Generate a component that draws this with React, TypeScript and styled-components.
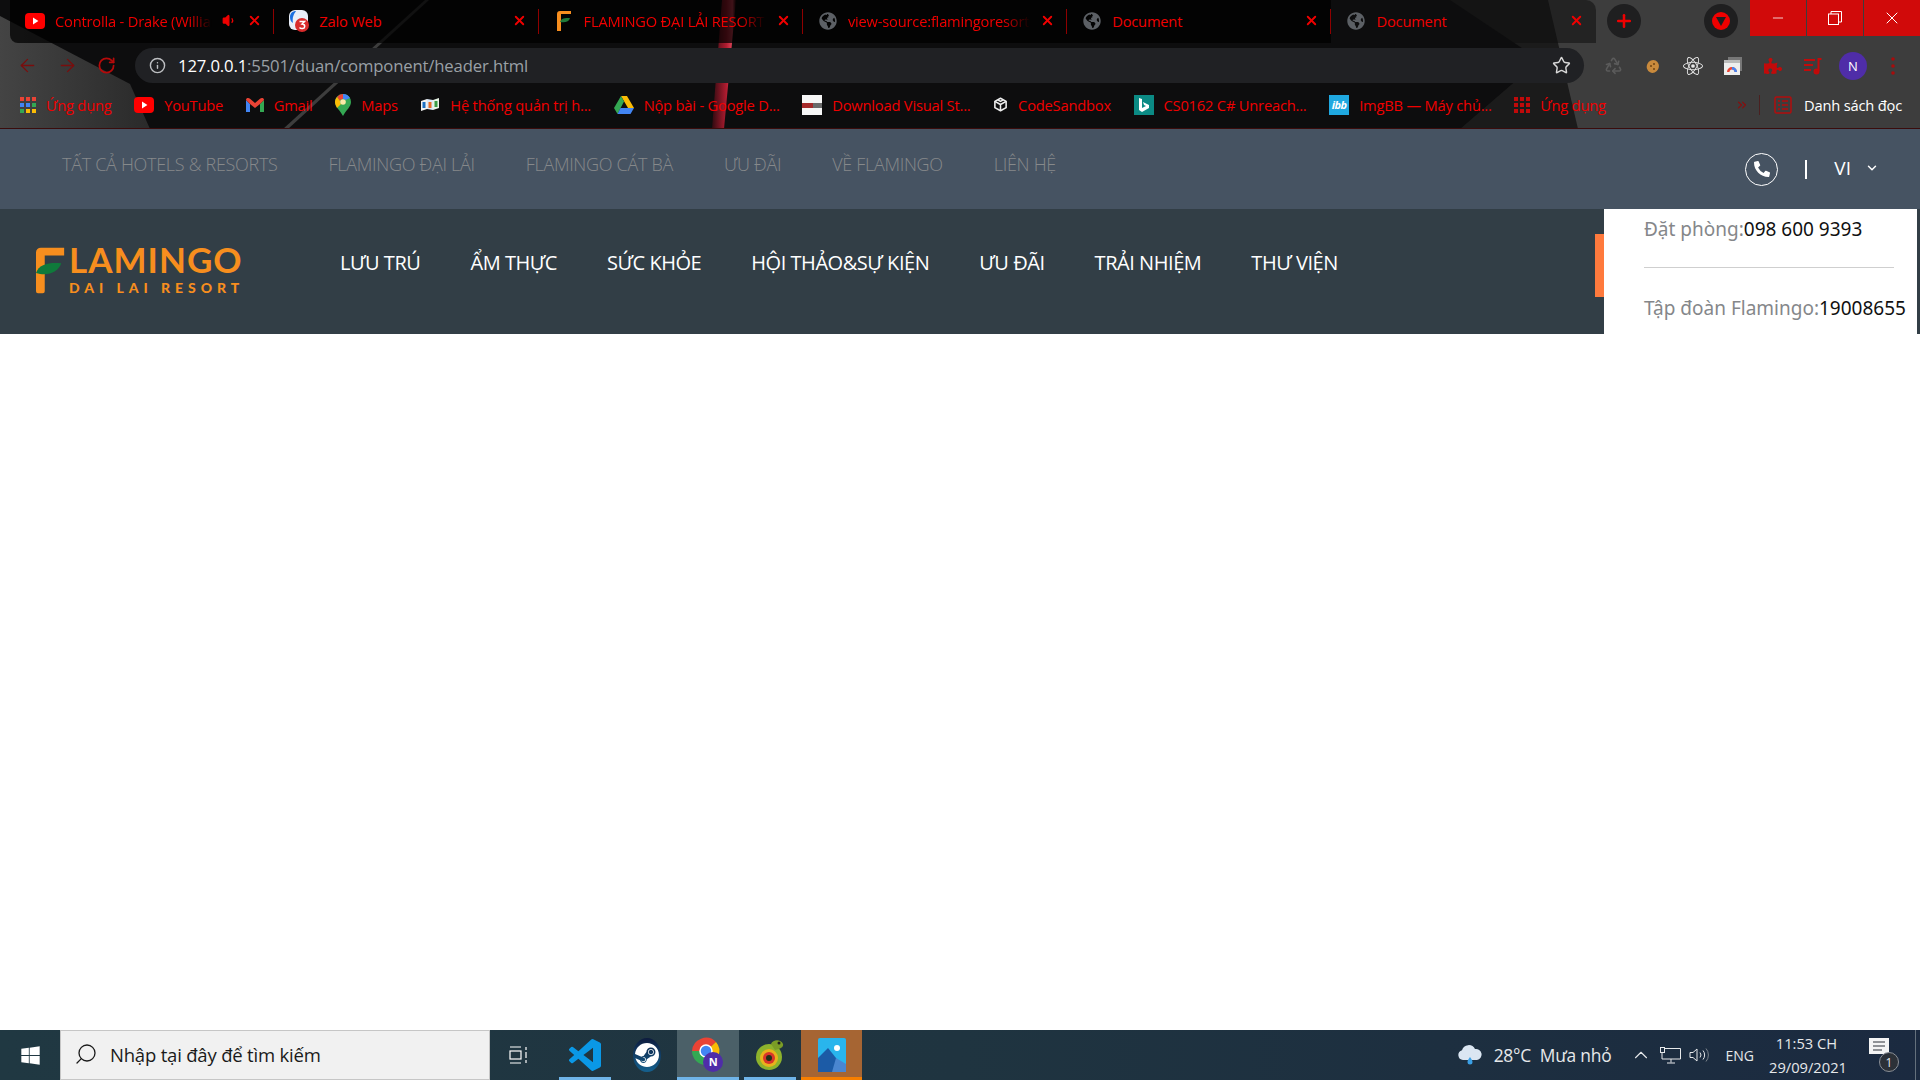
import React, { ReactNode } from 'react'
import styled, { createGlobalStyle } from 'styled-components'
import {
  ArrowLeft,
  ArrowRight,
  RotateCw,
  Info,
  Star,
  Recycle,
  X,
  Plus,
  Minus,
  Volume1,
  ChevronDown,
  ChevronUp,
  ChevronsRight,
  Search,
} from 'lucide-react'
import { FaGlobeAmericas, FaWindows, FaPuzzlePiece, FaPhoneAlt } from 'react-icons/fa'
import { SiSteam, SiReact } from 'react-icons/si'

const GlobalStyle = createGlobalStyle`
  html, body {
    margin: 0;
    padding: 0;
    height: 100%;
    overflow: hidden;
    background: #fff;
    font-family: "Open Sans", "Noto Sans", sans-serif;
  }
  * { box-sizing: border-box; }
`

const Page = styled.div`
  width: 1920px;
  height: 1080px;
  display: flex;
  flex-direction: column;
`

/* ---------- browser chrome ---------- */

const BrowserFrame = styled.div`
  position: relative;
  height: 129px;
  background: #0d0d0e;
  border-bottom: 1px solid #3a0c0c;
  overflow: hidden;
`

const Wallpaper = styled.svg`
  position: absolute;
  inset: 0;
`

const TabStrip = styled.div`
  position: relative;
  height: 48px;
  padding-left: 10px;
  display: flex;
  align-items: flex-start;
`

const Tab = styled.div<{ $last?: boolean; $first?: boolean }>`
  width: 264.3px;
  height: 43px;
  padding: 0 12px 2px 15px;
  display: flex;
  align-items: center;
  gap: 10px;
  background: ${({ $last }) => ($last ? 'rgba(14, 14, 14, 0.55)' : 'rgba(0, 0, 0, 0.72)')};
  border-radius: ${({ $first, $last }) => ($first ? '0 0 0 8px' : $last ? '0 10px 0 0' : '0')};
  flex: none;
  position: relative;
  &::after {
    content: '';
    display: ${({ $last }) => ($last ? 'none' : 'block')};
    position: absolute;
    right: 0;
    top: 9px;
    height: 25px;
    width: 1px;
    background: #8f0000;
  }
`

const FaviconSlot = styled.span`
  width: 20px;
  flex: none;
  display: flex;
  align-items: center;
  justify-content: center;
`

const TabTitle = styled.span<{ $fade?: boolean }>`
  flex: 1;
  min-width: 0;
  font-size: 14.7px;
  letter-spacing: -0.2px;
  color: #f00000;
  white-space: nowrap;
  overflow: hidden;
  ${({ $fade }) =>
    $fade && 'mask-image: linear-gradient(to right, #000 85%, transparent 100%);'}
`

const TabRound = styled.div`
  width: 34px;
  height: 34px;
  border-radius: 50%;
  background: #1f1f20;
  display: flex;
  align-items: center;
  justify-content: center;
  flex: none;
`

const NewTabSlot = styled(TabRound)`
  margin: 4px 0 0 11px;
`

const RecorderSlot = styled(TabRound)`
  margin: 4px 0 0 63px;
`

const RecorderDot = styled.div`
  width: 18px;
  height: 18px;
  border-radius: 50%;
  background: #f00000;
  display: flex;
  align-items: center;
  justify-content: center;
`

const WindowControls = styled.div`
  position: absolute;
  top: 0;
  right: 0;
  display: flex;
  gap: 1px;
`

const WindowButton = styled.div`
  width: 56px;
  height: 36px;
  background: #d10a0a;
  display: flex;
  align-items: center;
  justify-content: center;
  color: #fff;
`

const ToolbarRow = styled.div`
  position: relative;
  height: 35px;
  display: flex;
  align-items: center;
`

const NavButtons = styled.div`
  width: 135px;
  padding-left: 17px;
  display: flex;
  align-items: center;
  gap: 19px;
  color: #7a0d0d;
`

const ReloadIcon = styled.span`
  display: flex;
  color: #b50a0a;
`

const AddressPill = styled.div`
  width: 1449px;
  height: 35px;
  background: #202124;
  border-radius: 18px;
  display: flex;
  align-items: center;
  padding: 0 13px 0 14px;
  color: #bdbfc2;
`

const AddressText = styled.div`
  flex: 1;
  margin-left: 12px;
  font-size: 16.7px;
  letter-spacing: -0.15px;
  color: #9aa0a6;
  white-space: nowrap;
`

const Host = styled.span`
  color: #fff;
`

const Extensions = styled.div`
  display: flex;
  align-items: center;
  margin-left: 9px;
`

const Extension = styled.div`
  width: 40px;
  height: 35px;
  display: flex;
  align-items: center;
  justify-content: center;
  color: #c20a0a;
`

const Avatar = styled.div`
  width: 28px;
  height: 28px;
  border-radius: 50%;
  background: #4f2da8;
  color: #fff;
  font-size: 13px;
  display: flex;
  align-items: center;
  justify-content: center;
`

const BookmarkBar = styled.div`
  position: relative;
  height: 45px;
  padding: 0 18px 2px 20px;
  display: flex;
  align-items: center;
  gap: 22.6px;
`

const Bookmark = styled.div`
  display: flex;
  align-items: center;
  gap: 10px;
  flex: none;
  font-size: 14.7px;
  letter-spacing: -0.2px;
  color: #f00000;
  white-space: nowrap;
`

const BookmarkEnd = styled.div`
  margin-left: auto;
  display: flex;
  align-items: center;
  color: #8a0d0d;
`

const BookmarkDivider = styled.div`
  width: 1px;
  height: 20px;
  background: #4a2020;
  margin: 0 14px 0 10px;
`

const ReadingLabel = styled.span`
  margin-left: 12px;
  font-size: 14.7px;
  letter-spacing: -0.2px;
  color: #fff;
`

const IbbBadge = styled.span`
  width: 20px;
  height: 20px;
  background: #1fa8e0;
  color: #fff;
  font-size: 11px;
  font-style: italic;
  font-weight: 700;
  letter-spacing: -0.5px;
  display: flex;
  align-items: center;
  justify-content: center;
`

const BingBadge = styled.span`
  width: 20px;
  height: 20px;
  background: #0b8a84;
  display: flex;
  align-items: center;
  justify-content: center;
`

/* ---------- website header ---------- */

const TopBar = styled.div`
  height: 80px;
  background: #465362;
  display: flex;
  align-items: center;
  padding: 0 41px 10px 62px;
`

const TopLinks = styled.nav`
  display: flex;
  gap: 51px;
  flex: 1;
`

const TopLink = styled.a`
  font-size: 18px;
  font-weight: 300;
  letter-spacing: -0.3px;
  color: #86898b;
`

const TopActions = styled.div`
  display: flex;
  align-items: center;
  margin-top: 10px;
  color: #fff;
`

const PhoneCircle = styled.div`
  width: 33px;
  height: 33px;
  border-radius: 50%;
  border: 1.5px solid #fff;
  display: flex;
  align-items: center;
  justify-content: center;
`

const Pipe = styled.span`
  width: 2px;
  height: 19px;
  margin: 0 27px 0 27px;
  background: #fff;
`

const Lang = styled.div`
  display: flex;
  align-items: center;
  gap: 14px;
  font-size: 19px;
  margin-top: -3px;
`

const MainBar = styled.div`
  position: relative;
  height: 125px;
  background: #323e46;
  display: flex;
  align-items: center;
  padding-left: 36px;
`

const Logo = styled.div`
  width: 204px;
  margin-right: 100px;
  flex: none;
  display: flex;
  align-items: flex-start;
  svg {
    flex: none;
  }
`

const LogoText = styled.div`
  display: flex;
  flex-direction: column;
  margin-top: -3px;
  color: #f78e1e;
  font-family: "Lato", sans-serif;
`

const LogoName = styled.span`
  font-size: 35px;
  font-weight: 700;
  line-height: 30px;
  letter-spacing: 1px;
`

const LogoSub = styled.span`
  font-size: 14px;
  font-weight: 900;
  line-height: 16px;
  margin-top: 6px;
  letter-spacing: 4.95px;
  white-space: nowrap;
`

const MainLinks = styled.nav`
  display: flex;
  gap: 50px;
  margin-bottom: 19px;
`

const MainLink = styled.a`
  font-size: 20px;
  letter-spacing: -0.45px;
  color: #fff;
`

const BookTab = styled.div`
  position: absolute;
  left: 1595px;
  top: 25px;
  width: 9px;
  height: 63px;
  background: #ff7a3d;
`

const HotlinePanel = styled.div`
  position: absolute;
  top: 0;
  right: 3px;
  width: 313px;
  height: 125px;
  background: #fff;
  padding-left: 40px;
  font-family: "Noto Sans", "Open Sans", sans-serif;
  font-size: 19px;
  color: #85878a;
`

const HotlineRow = styled.div`
  height: 40px;
  line-height: 40px;
  white-space: nowrap;
`

const HotlineNumber = styled.span`
  color: #111;
`

const HotlineRule = styled.div`
  width: 250px;
  height: 1px;
  background: #cfcfcf;
  margin: 18px 0 20px 0;
`

const Blank = styled.main`
  flex: 1;
  background: #fff;
`

/* ---------- windows taskbar ---------- */

const Taskbar = styled.div`
  height: 50px;
  display: flex;
  align-items: stretch;
  background: linear-gradient(to right, #203842 0%, #1f3440 50%, #1b2a40 100%);
  color: #fff;
`

const StartButton = styled.div`
  width: 60px;
  display: flex;
  align-items: center;
  justify-content: center;
`

const SearchBox = styled.div`
  width: 430px;
  background: #f1f1f1;
  border: 1px solid #c6c6c6;
  display: flex;
  align-items: center;
  padding: 0 0 2px 13px;
  gap: 12px;
  color: #1a1a1a;
  font-size: 18.5px;
  letter-spacing: -0.2px;
`

const TaskViewSlot = styled.div`
  width: 64px;
  padding-right: 6px;
  display: flex;
  align-items: center;
  justify-content: center;
`

const TaskApp = styled.div<{ $active?: boolean; $running?: boolean; $accent?: boolean }>`
  position: relative;
  width: 61.7px;
  display: flex;
  align-items: center;
  justify-content: center;
  background: ${({ $active, $accent }) =>
    $accent ? '#a66533' : $active ? '#4b6068' : 'transparent'};
  &::after {
    content: '';
    position: absolute;
    left: ${({ $active, $accent }) => ($active || $accent ? '0' : '5px')};
    right: ${({ $active, $accent }) => ($active || $accent ? '0' : '5px')};
    bottom: 0;
    height: 3px;
    display: ${({ $running }) => ($running ? 'block' : 'none')};
    background: ${({ $accent }) => ($accent ? '#f77f00' : '#6fb4e8')};
  }
`

const Tray = styled.div`
  margin-left: auto;
  display: flex;
  align-items: center;
  padding-right: 6px;
  font-size: 16px;
  color: #e6e8ea;
`

const Weather = styled.div`
  display: flex;
  align-items: center;
  gap: 11px;
  margin-right: 15px;
  font-size: 17.4px;
  letter-spacing: -0.2px;
`

const TrayIcon = styled.div`
  width: 29px;
  display: flex;
  align-items: center;
  justify-content: center;
`

const LangMark = styled.span`
  font-size: 14px;
  margin: 0 15px 0 12px;
`

const Clock = styled.div`
  width: 75px;
  font-size: 14.7px;
  line-height: 24px;
  text-align: center;
  white-space: nowrap;
`

const NotifySlot = styled.div`
  position: relative;
  width: 32px;
  margin-left: 25px;
  margin-right: 8px;
  height: 34px;
`

const NotifyBadge = styled.span`
  position: absolute;
  right: 2px;
  bottom: 0;
  width: 20px;
  height: 20px;
  border-radius: 50%;
  background: #2c3138;
  border: 1px solid #8a8f96;
  font-size: 12px;
  display: flex;
  align-items: center;
  justify-content: center;
`

const PeekStrip = styled.div`
  width: 5px;
  border-left: 1px solid #64707c;
`

/* ---------- small drawings ---------- */

const YoutubeIcon = () => (
  <svg width="20" height="16" viewBox="0 0 20 16">
    <rect width="20" height="16" rx="4" fill="#f00" />
    <path d="M8 4.6 13.4 8 8 11.4z" fill="#fff" />
  </svg>
)

const ZaloIcon = () => (
  <svg width="20" height="24" viewBox="0 0 20 24">
    <rect y="1" width="19" height="20" rx="6" fill="#e9eef8" />
    <path d="M1 8c0-4 3-6 6-6-2 3-4 6-3 12-2-1-3-3-3-6z" fill="#1b6fe0" />
    <circle cx="13" cy="16" r="7" fill="#d92b2b" />
    <path d="M10.5 12.5h5l-2.4 2.6c1.6 0 2.6 1 2.6 2.3 0 2.4-3.6 2.8-5.2 1" stroke="#fff" strokeWidth="1.5" fill="none" />
  </svg>
)

const FlamingoFavicon = () => (
  <svg width="14" height="20" viewBox="0 0 14 20">
    <path d="M0 3a3 3 0 0 1 3-3h11v3H4v17H0z" fill="#f78e1e" />
    <path d="M3 11c1-4 5-4 10-4-1 4-5 5-10 4z" fill="#1f7a3a" />
  </svg>
)

const AppsGrid = ({ colored }: { colored?: boolean }) => {
  const colors = colored
    ? ['#ea4335', '#ea4335', '#ea4335', '#4285f4', '#4285f4', '#34a853', '#34a853', '#fbbc05', '#fbbc05']
    : Array(9).fill('#c00a0a')
  return (
    <svg width="16" height="16" viewBox="0 0 16 16">
      {colors.map((c, i) => (
        <rect key={i} x={(i % 3) * 6} y={Math.floor(i / 3) * 6} width="4" height="4" fill={c} />
      ))}
    </svg>
  )
}

const GmailIcon = () => (
  <svg width="18" height="14" viewBox="0 0 18 14">
    <path d="M0 2v12h4V6z" fill="#4285f4" />
    <path d="M14 6v8h4V2z" fill="#34a853" />
    <path d="M0 2c0-2 2.500-2.500 4-1.200L9 5 14 .8C15.500-.5 18 0 18 2l-4 4-5 4-5-4z" fill="#ea4335" />
  </svg>
)

const MapsIcon = () => (
  <svg width="16" height="22" viewBox="0 0 16 22">
    <path d="M8 0a8 8 0 0 1 8 8c0 5-5 8-8 14C5 16 0 13 0 8a8 8 0 0 1 8-8z" fill="#34a853" />
    <path d="M2 3a8 8 0 0 1 6-3v5a3 3 0 0 0-3 2z" fill="#ea4335" />
    <path d="M8 0a8 8 0 0 1 7 4l-4.500 2A3 3 0 0 0 8 5z" fill="#4285f4" />
    <path d="M0 8c0-2 1-4 2-5l3 4a3 3 0 0 0 1 3l-4 4C1 12 0 10 0 8z" fill="#fbbc05" />
    <circle cx="8" cy="8" r="2.800" fill="#fbe9a8" />
  </svg>
)

const FptIcon = () => (
  <svg width="20" height="16" viewBox="0 0 20 16">
    <path d="M1 4l6-2v10l-6 2z" fill="#f2f2f2" />
    <path d="M7 2l6 1v10l-6-1z" fill="#dbe8f7" />
    <path d="M13 3l6-2v10l-6 2z" fill="#e8f4e6" />
    <rect x="2.500" y="5" width="3" height="6" fill="#1b6fc2" />
    <rect x="8.500" y="5" width="3" height="6" fill="#e96b25" />
    <rect x="14.500" y="4" width="3" height="6" fill="#3a9c45" />
  </svg>
)

const DriveIcon = () => (
  <svg width="20" height="18" viewBox="0 0 20 18">
    <path d="M7 0h6l7 12h-6z" fill="#fbbc05" />
    <path d="M7 0l3 5.500L3.500 18 0 12z" fill="#34a853" />
    <path d="M6.500 12H20l-3.500 6H3.500z" fill="#4285f4" />
  </svg>
)

const DownloadIcon = () => (
  <svg width="20" height="20" viewBox="0 0 20 20">
    <rect width="20" height="20" fill="#f7f7f7" />
    <rect y="8" width="20" height="5" fill="#6b6b6b" />
    <rect y="8" width="11" height="5" fill="#a52a2a" />
  </svg>
)

const SandboxIcon = () => (
  <svg width="15" height="15" viewBox="0 0 24 24" fill="none" stroke="#eee" strokeWidth="2.500" strokeLinejoin="round">
    <path d="M12 2 3 7v10l9 5 9-5V7z" />
    <path d="M3 7l9 5 9-5M12 12v10M7.500 4.500 12 7l4.500-2.500" />
  </svg>
)

const ReadingIcon = () => (
  <svg width="18" height="18" viewBox="0 0 18 18" fill="none" stroke="#b30d0d" strokeWidth="1.500">
    <rect x="1" y="1" width="16" height="16" rx="1.500" />
    <path d="M4 5h2M8 5h6M4 9h2M8 9h6M4 13h2M8 13h6" />
  </svg>
)

const MusicQueueIcon = () => (
  <svg width="20" height="18" viewBox="0 0 20 18" fill="none" stroke="#c20a0a" strokeWidth="2">
    <path d="M1 3h11M1 8h9M1 13h7" />
    <path d="M15.500 14V2h3" />
    <circle cx="13.500" cy="14.500" r="2" fill="#c20a0a" />
  </svg>
)

const CookieIcon = () => (
  <svg width="14" height="16" viewBox="0 0 14 16">
    <ellipse cx="7" cy="8.500" rx="6" ry="6.500" fill="#c98a3c" transform="rotate(25 7 8)" />
    <circle cx="5" cy="8" r="1" fill="#6e4313" />
    <circle cx="8" cy="6" r="1" fill="#6e4313" />
    <circle cx="8" cy="11" r="1" fill="#6e4313" />
  </svg>
)

const WindowStackIcon = () => (
  <svg width="18" height="18" viewBox="0 0 18 18">
    <rect x="4" y="0" width="14" height="14" fill="#777" />
    <rect x="0" y="3" width="16" height="15" fill="#eee" />
    <rect x="0" y="3" width="16" height="3" fill="#bbb" />
    <path d="M3 15a5 5 0 0 1 10 0h-2.500a2.500 2.500 0 0 0-5 0z" fill="#ea4335" />
    <path d="M8 10a5 5 0 0 1 5 5h-2.500A2.500 2.500 0 0 0 8 12.500z" fill="#4285f4" />
  </svg>
)

const RestoreIcon = () => (
  <svg width="14" height="14" viewBox="0 0 14 14" fill="none" stroke="#fff" strokeWidth="1">
    <rect x="0.500" y="3" width="10" height="10.500" />
    <path d="M3 3V.5h10.500v10.500H10.500" />
  </svg>
)

const TaskViewIcon = () => (
  <svg width="20" height="18" viewBox="0 0 20 18" fill="none" stroke="#fff" strokeWidth="1.200">
    <path d="M1 1h11M1 17h11" />
    <rect x="1" y="5" width="11" height="8" />
    <path d="M17 1v3M17 6v6M17 14v3" />
  </svg>
)

const VsCodeIcon = () => (
  <svg width="32" height="34" viewBox="0 0 24 24">
    <path
      d="M23.15 2.587L18.21.21a1.494 1.494 0 0 0-1.705.29l-9.46 8.63-4.12-3.128a.999.999 0 0 0-1.276.057L.327 7.261A1 1 0 0 0 .326 8.74L3.899 12 .326 15.26a1 1 0 0 0 .001 1.479L1.65 17.94a.999.999 0 0 0 1.276.057l4.12-3.128 9.46 8.63a1.492 1.492 0 0 0 1.704.29l4.942-2.377A1.5 1.5 0 0 0 24 20.06V3.939a1.5 1.5 0 0 0-.85-1.352zm-5.146 14.861L10.826 12l7.178-5.448v10.896z"
      fill="#0a98e6"
    />
  </svg>
)

const ChromeProfileIcon = () => (
  <svg width="34" height="38" viewBox="0 0 34 38">
    <path d="M15 15 1 15a14 14 0 0 1 24-9z" fill="#ea4335" />
    <path d="M15 15l10-9a14 14 0 0 1-9 23z" fill="#fbbc05" />
    <path d="M15 15v14A14 14 0 0 1 1 15z" fill="#34a853" />
    <circle cx="15" cy="15" r="6" fill="#4285f4" stroke="#fff" strokeWidth="1.500" />
    <circle cx="22" cy="26" r="10" fill="#4f2da8" />
  </svg>
)

const SteamDisc = styled.div`
  width: 28px;
  height: 34px;
  border-radius: 50%;
  background: linear-gradient(#0d1b3d, #15618f);
  display: flex;
  align-items: center;
  justify-content: center;
`

const ChromeBadgeWrap = styled.div`
  position: relative;
  width: 34px;
  height: 38px;
`

const ChromeBadge = styled.span`
  position: absolute;
  left: 12px;
  top: 16px;
  width: 20px;
  text-align: center;
  font-size: 11px;
  font-weight: 700;
  line-height: 20px;
  color: #fff;
`

const SnailIcon = () => (
  <svg width="30" height="34" viewBox="0 0 30 34">
    <circle cx="14" cy="19" r="13" fill="#8db32c" />
    <circle cx="14" cy="20" r="9" fill="#e8b21c" />
    <circle cx="14" cy="20" r="6" fill="#d8352a" />
    <circle cx="14" cy="20" r="3" fill="#22301a" />
    <path d="M16 6c2-5 10-5 12 0 1 3-3 5-8 6z" fill="#7a9d26" />
    <circle cx="24" cy="5" r="1.500" fill="#1e1e1e" />
  </svg>
)

const PhotosIcon = () => (
  <svg width="28" height="34" viewBox="0 0 28 34">
    <rect width="28" height="34" rx="2" fill="#29b5ec" />
    <path d="M0 34V20l10-10 8 10 10 14z" fill="#1c5ba6" />
    <path d="M14 34l4-14 10 6v8z" fill="#4a86d0" />
    <circle cx="19" cy="10" r="3" fill="#fff" />
  </svg>
)

const CloudIcon = () => (
  <svg width="26" height="20" viewBox="0 0 26 20">
    <path d="M6 15a5 5 0 0 1-1-9.800A7 7 0 0 1 18 4a5.500 5.500 0 0 1 2 11z" fill="#dbe6f2" />
    <path d="M13 12c1.500 2 2.500 3.500 2.500 5a2.500 2.500 0 0 1-5 0c0-1.500 1-3 2.500-5z" fill="#3ba0e6" />
  </svg>
)

const NetworkIcon = () => (
  <svg width="21" height="17" viewBox="0 0 21 17" fill="none" stroke="#e6e8ea" strokeWidth="1">
    <path d="M5 1.500h15.500V12H2V6" />
    <rect x="0.500" y="0.500" width="4" height="5" />
    <path d="M11 12v3.500M7 16h8" />
  </svg>
)

const SpeakerIcon = () => (
  <svg width="20" height="16" viewBox="0 0 20 16" fill="none" stroke="#e6e8ea" strokeWidth="1">
    <path d="M1 5.500h3L8 2v12l-4-3.500H1z" />
    <path d="M11 5.500a4 4 0 0 1 0 5M14 3.500a7 7 0 0 1 0 9" />
    <path d="M17 1.500a10 10 0 0 1 0 13" stroke="#7a828b" />
  </svg>
)

const NotifyIcon = () => (
  <svg width="20" height="20" viewBox="0 0 20 20">
    <path d="M0 0h20v16H0z" fill="#f4f4f4" />
    <path d="M4 4h12M4 8h12M4 12h9" stroke="#2c3138" strokeWidth="1.200" />
  </svg>
)

const GlobeFavicon = () => <FaGlobeAmericas size={18} color="#5c6065" />

const CloseTab = () => <X size={15} color="#f00000" strokeWidth={3} />

type TabData = { icon: ReactNode; title: string; fade?: boolean; extra?: ReactNode }

const tabs: TabData[] = [
  {
    icon: <YoutubeIcon />,
    title: 'Controlla - Drake (William Remix)',
    fade: true,
    extra: <Volume1 size={15} color="#f00000" fill="#f00000" />,
  },
  { icon: <ZaloIcon />, title: 'Zalo Web' },
  { icon: <FlamingoFavicon />, title: 'FLAMINGO ĐẠI LẢI RESORT', fade: true },
  { icon: <GlobeFavicon />, title: 'view-source:flamingoresorts.com', fade: true },
  { icon: <GlobeFavicon />, title: 'Document' },
  { icon: <GlobeFavicon />, title: 'Document' },
]

const bookmarks: { icon: ReactNode; label: string }[] = [
  { icon: <AppsGrid colored />, label: 'Ứng dụng' },
  { icon: <YoutubeIcon />, label: 'YouTube' },
  { icon: <GmailIcon />, label: 'Gmail' },
  { icon: <MapsIcon />, label: 'Maps' },
  { icon: <FptIcon />, label: 'Hệ thống quản trị h...' },
  { icon: <DriveIcon />, label: 'Nộp bài - Google D...' },
  { icon: <DownloadIcon />, label: 'Download Visual St...' },
  { icon: <SandboxIcon />, label: 'CodeSandbox' },
  {
    icon: (
      <BingBadge>
        <svg width="12" height="16" viewBox="0 0 12 16">
          <path d="M1 1l3 1v9l4-2-2-1-1-3 6 3v3l-7 4-3-2z" fill="#fff" />
        </svg>
      </BingBadge>
    ),
    label: 'CS0162 C# Unreach...',
  },
  { icon: <IbbBadge>ibb</IbbBadge>, label: 'ImgBB — Máy chủ...' },
  { icon: <AppsGrid />, label: 'Ứng dụng' },
]

const topLinks = [
  'TẤT CẢ HOTELS & RESORTS',
  'FLAMINGO ĐẠI LẢI',
  'FLAMINGO CÁT BÀ',
  'ƯU ĐÃI',
  'VỀ FLAMINGO',
  'LIÊN HỆ',
]

const mainLinks = [
  'LƯU TRÚ',
  'ẨM THỰC',
  'SỨC KHỎE',
  'HỘI THẢO&SỰ KIỆN',
  'ƯU ĐÃI',
  'TRẢI NHIỆM',
  'THƯ VIỆN',
]

const App: React.FC = () => (
  <>
    <GlobalStyle />
    <Page>
      <BrowserFrame>
        <Wallpaper width="1920" height="129" viewBox="0 0 1920 129">
          <defs>
            <linearGradient id="leftShade" x1="0" y1="0" x2="1" y2="0">
              <stop offset="0" stopColor="#444" />
              <stop offset="1" stopColor="#2a2a2a" />
            </linearGradient>
            <linearGradient id="streak" x1="0" y1="0" x2="1" y2="0">
              <stop offset="0" stopColor="#300a10" />
              <stop offset="0.6" stopColor="#b01c30" />
              <stop offset="0.85" stopColor="#e0455a" />
              <stop offset="1" stopColor="#2a0a0c" />
            </linearGradient>
          </defs>
          <path d="M0 16 L130 84 L150 129 L0 129z" fill="url(#leftShade)" />
          <path d="M425 0 L429 0 L288 129 L283 129z" fill="#3d3d3d" />
          <path d="M712 129 L724 129 L736 0 L722 0z" fill="url(#streak)" />
          <path d="M1450 0 L1920 0 L1920 129 L1460 129 L1540 60z" fill="#1b1b1b" />
          <path d="M1548 0 L1920 0 L1920 129 L1578 129z" fill="#3d3d3d" />
        </Wallpaper>

        <TabStrip>
          {tabs.map((tab, i) => (
            <Tab key={i} $first={i === 0} $last={i === tabs.length - 1}>
              <FaviconSlot>{tab.icon}</FaviconSlot>
              <TabTitle $fade={tab.fade}>{tab.title}</TabTitle>
              {tab.extra}
              <CloseTab />
            </Tab>
          ))}
          <NewTabSlot>
            <Plus size={20} color="#f00000" strokeWidth={3} />
          </NewTabSlot>
          <RecorderSlot>
            <RecorderDot>
              <svg width="10" height="9" viewBox="0 0 10 9">
                <path d="M0 0h10L5 9z" fill="#1f1f20" />
              </svg>
            </RecorderDot>
          </RecorderSlot>
          <WindowControls>
            <WindowButton>
              <Minus size={16} strokeWidth={1.2} />
            </WindowButton>
            <WindowButton>
              <RestoreIcon />
            </WindowButton>
            <WindowButton>
              <X size={20} strokeWidth={1.2} />
            </WindowButton>
          </WindowControls>
        </TabStrip>

        <ToolbarRow>
          <NavButtons>
            <ArrowLeft size={21} strokeWidth={1.5} />
            <ArrowRight size={21} strokeWidth={1.5} />
            <ReloadIcon>
              <RotateCw size={19} strokeWidth={2.2} />
            </ReloadIcon>
          </NavButtons>
          <AddressPill>
            <Info size={17} />
            <AddressText>
              <Host>127.0.0.1</Host>:5501/duan/component/header.html
            </AddressText>
            <Star size={19} strokeWidth={1.8} color="#d8d8d8" />
          </AddressPill>
          <Extensions>
            <Extension>
              <Recycle size={19} color="#5b5b5b" />
            </Extension>
            <Extension>
              <CookieIcon />
            </Extension>
            <Extension>
              <SiReact size={20} color="#e8e8e8" />
            </Extension>
            <Extension>
              <WindowStackIcon />
            </Extension>
            <Extension>
              <FaPuzzlePiece size={18} />
            </Extension>
            <Extension>
              <MusicQueueIcon />
            </Extension>
            <Extension>
              <Avatar>N</Avatar>
            </Extension>
            <Extension>
              <svg width="4" height="18" viewBox="0 0 4 18" fill="#a80c0c">
                <circle cx="2" cy="2" r="1.800" />
                <circle cx="2" cy="9" r="1.800" />
                <circle cx="2" cy="16" r="1.800" />
              </svg>
            </Extension>
          </Extensions>
        </ToolbarRow>

        <BookmarkBar>
          {bookmarks.map((b, i) => (
            <Bookmark key={i}>
              {b.icon}
              {b.label}
            </Bookmark>
          ))}
          <BookmarkEnd>
            <ChevronsRight size={14} />
            <BookmarkDivider />
            <ReadingIcon />
            <ReadingLabel>Danh sách đọc</ReadingLabel>
          </BookmarkEnd>
        </BookmarkBar>
      </BrowserFrame>

      <TopBar>
        <TopLinks>
          {topLinks.map(link => (
            <TopLink key={link}>{link}</TopLink>
          ))}
        </TopLinks>
        <TopActions>
          <PhoneCircle>
            <FaPhoneAlt size={16} />
          </PhoneCircle>
          <Pipe />
          <Lang>
            VI
            <ChevronDown size={14} strokeWidth={2.5} />
          </Lang>
        </TopActions>
      </TopBar>

      <MainBar>
        <Logo>
          <svg width="33" height="47" viewBox="0 0 34 47">
            <path d="M0 5a5 5 0 0 1 5-5h24v8H9v37a2 2 0 0 1-2 2H2a2 2 0 0 1-2-2z" fill="#f78e1e" />
            <path d="M0 26c3-9 13-11 26-10-3 9-14 14-26 10z" fill="#0f7a3b" />
          </svg>
          <LogoText>
            <LogoName>LAMINGO</LogoName>
            <LogoSub>DAI LAI RESORT</LogoSub>
          </LogoText>
        </Logo>
        <MainLinks>
          {mainLinks.map(link => (
            <MainLink key={link}>{link}</MainLink>
          ))}
        </MainLinks>
        <BookTab />
        <HotlinePanel>
          <HotlineRow>
            Đặt phòng:<HotlineNumber>098 600 9393</HotlineNumber>
          </HotlineRow>
          <HotlineRule />
          <HotlineRow>
            Tập đoàn Flamingo:<HotlineNumber>19008655</HotlineNumber>
          </HotlineRow>
        </HotlinePanel>
      </MainBar>

      <Blank />

      <Taskbar>
        <StartButton>
          <FaWindows size={21} />
        </StartButton>
        <SearchBox>
          <Search size={24} strokeWidth={1.3} style={{ transform: 'scaleX(-1)' }} />
          Nhập tại đây để tìm kiếm
        </SearchBox>
        <TaskViewSlot>
          <TaskViewIcon />
        </TaskViewSlot>
        <TaskApp $running>
          <VsCodeIcon />
        </TaskApp>
        <TaskApp>
          <SteamDisc>
            <SiSteam size={24} color="#fff" />
          </SteamDisc>
        </TaskApp>
        <TaskApp $active $running>
          <ChromeBadgeWrap>
            <ChromeProfileIcon />
            <ChromeBadge>N</ChromeBadge>
          </ChromeBadgeWrap>
        </TaskApp>
        <TaskApp $running>
          <SnailIcon />
        </TaskApp>
        <TaskApp $accent $running>
          <PhotosIcon />
        </TaskApp>
        <Tray>
          <Weather>
            <CloudIcon />
            <span>28°C&nbsp; Mưa nhỏ</span>
          </Weather>
          <TrayIcon>
            <ChevronUp size={22} strokeWidth={1.2} />
          </TrayIcon>
          <TrayIcon>
            <NetworkIcon />
          </TrayIcon>
          <TrayIcon>
            <SpeakerIcon />
          </TrayIcon>
          <LangMark>ENG</LangMark>
          <Clock>
            11:53 CH
            <br />
            29/09/2021
          </Clock>
          <NotifySlot>
            <NotifyIcon />
            <NotifyBadge>1</NotifyBadge>
          </NotifySlot>
        </Tray>
        <PeekStrip />
      </Taskbar>
    </Page>
  </>
)

export default App
